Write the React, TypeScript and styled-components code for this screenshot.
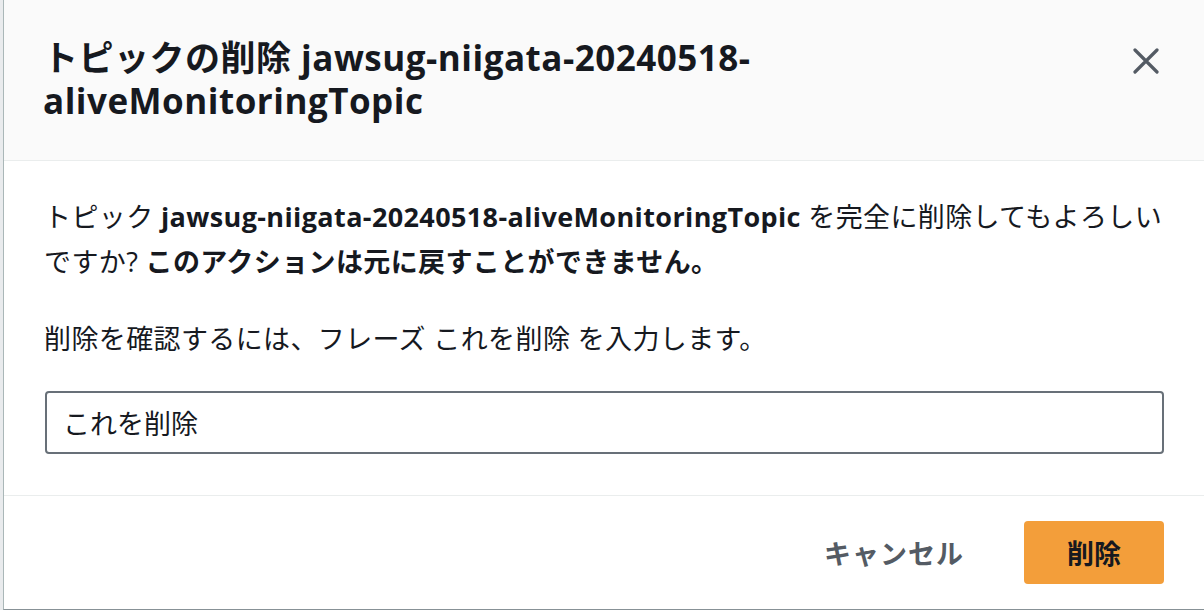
import React from "react";
import styled, { createGlobalStyle } from "styled-components";

const GlobalStyle = createGlobalStyle`
  html, body { margin: 0; padding: 0; }
  body {
    background: #e9ebed;
    font-family: "Open Sans", "Noto Sans CJK JP", sans-serif;
    color: #16191f;
    overflow: hidden;
  }
`;

const Page = styled.div`
  width: 1204px;
  height: 610px;
  padding-left: 3px;
  box-sizing: border-box;
  overflow: hidden;
`;

const Modal = styled.div`
  width: 1210px;
  height: 609px;
  background: #ffffff;
  border-left: 1px solid #aab7b8;
  border-bottom: 1px solid #879196;
  display: flex;
  flex-direction: column;
`;

const Header = styled.div`
  background: #fafafa;
  border-bottom: 1px solid #eaeded;
  height: 161px;
  box-sizing: border-box;
  padding: 36px 42px 0 39px;
  display: flex;
  justify-content: space-between;
  align-items: flex-start;
`;

const Title = styled.h2`
  margin: 0;
  width: 900px;
  font-size: 35px;
  line-height: 43px;
  font-weight: 700;
  letter-spacing: 0.5px;
  color: #16191f;
`;

const CloseButton = styled.button`
  border: none;
  background: transparent;
  padding: 0;
  width: 26px;
  height: 26px;
  margin-top: 12px;
  margin-right: 13px;
  cursor: pointer;
  display: flex;
  color: #545b64;
`;

const Body = styled.div`
  padding: 33px 42px 41px 40px;
  display: flex;
  flex-direction: column;
  border-bottom: 1px solid #eaeded;
  width: 1119px;
`;

const Text = styled.p<{ $gap?: number }>`
  margin: 0 0 ${(p) => p.$gap ?? 0}px 0;
  font-size: 27px;
  line-height: 45px;
  font-weight: 400;
  letter-spacing: 0.38px;
`;

const Input = styled.input`
  box-sizing: border-box;
  width: 1119px;
  height: 63px;
  margin-left: 1px;
  border: 2px solid #687078;
  border-radius: 4px;
  padding: 0 16px;
  font-family: "Open Sans", "Noto Sans CJK JP", sans-serif;
  font-size: 27px;
  color: #16191f;
  background: #fff;
  outline: none;
`;

const Footer = styled.div`
  padding: 25px 0 0 0;
  width: 1160px;
  display: flex;
  justify-content: flex-end;
  align-items: center;
`;

const Button = styled.button<{ $primary?: boolean }>`
  font-family: "Open Sans", "Noto Sans CJK JP", sans-serif;
  font-size: 27px;
  font-weight: 700;
  height: 63px;
  border-radius: 4px;
  cursor: pointer;
  border: none;
  letter-spacing: ${(p) => (p.$primary ? 0 : 1)}px;
  padding: 0 ${(p) => (p.$primary ? 43 : 40)}px;
  margin-left: ${(p) => (p.$primary ? 20 : 0)}px;
  background: ${(p) => (p.$primary ? "#f39e3a" : "transparent")};
  color: ${(p) => (p.$primary ? "#16191f" : "#545b64")};
`;

export default function App() {
  return (
    <>
      <GlobalStyle />
      <Page>
        <Modal>
          <Header>
            <Title>トピックの削除 jawsug-niigata-20240518-aliveMonitoringTopic</Title>
            <CloseButton aria-label="閉じる">
              <svg width="26" height="26" viewBox="0 0 26 26">
                <path d="M2 2 L24 24 M24 2 L2 24" stroke="#545b64" strokeWidth="3.2" strokeLinecap="round" fill="none" />
              </svg>
            </CloseButton>
          </Header>
          <Body>
            <Text $gap={32}>
              トピック <b>jawsug-niigata-20240518-aliveMonitoringTopic</b> を完全に削除してもよろしいですか? <b>このアクションは元に戻すことができません。</b>
            </Text>
            <Text $gap={30}>削除を確認するには、フレーズ これを削除 を入力します。</Text>
            <Input defaultValue="これを削除" />
          </Body>
          <Footer>
            <Button>キャンセル</Button>
            <Button $primary>削除</Button>
          </Footer>
        </Modal>
      </Page>
    </>
  );
}
